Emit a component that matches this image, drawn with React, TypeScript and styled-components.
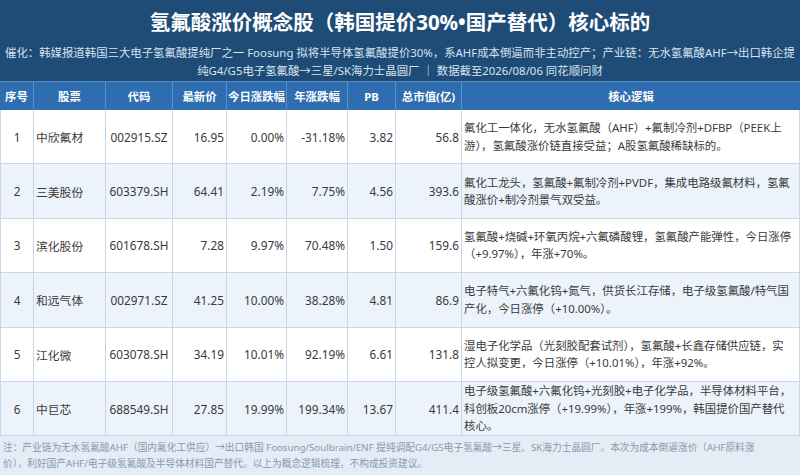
import styled, { createGlobalStyle } from "styled-components";

interface StockRow {
  no: number;
  name: string;
  code: string;
  price: string;
  today: string;
  year: string;
  pb: string;
  cap: string;
  logic: string[];
}

const rows: StockRow[] = [
  {
    no: 1,
    name: "中欣氟材",
    code: "002915.SZ",
    price: "16.95",
    today: "0.00%",
    year: "-31.18%",
    pb: "3.82",
    cap: "56.8",
    logic: ["氟化工一体化，无水氢氟酸（AHF）+氟制冷剂+DFBP（PEEK上", "游），氢氟酸涨价链直接受益；A股氢氟酸稀缺标的。"],
  },
  {
    no: 2,
    name: "三美股份",
    code: "603379.SH",
    price: "64.41",
    today: "2.19%",
    year: "7.75%",
    pb: "4.56",
    cap: "393.6",
    logic: ["氟化工龙头，氢氟酸+氟制冷剂+PVDF，集成电路级氟材料，氢氟", "酸涨价+制冷剂景气双受益。"],
  },
  {
    no: 3,
    name: "滨化股份",
    code: "601678.SH",
    price: "7.28",
    today: "9.97%",
    year: "70.48%",
    pb: "1.50",
    cap: "159.6",
    logic: ["氢氟酸+烧碱+环氧丙烷+六氟磷酸锂，氢氟酸产能弹性，今日涨停", "（+9.97%），年涨+70%。"],
  },
  {
    no: 4,
    name: "和远气体",
    code: "002971.SZ",
    price: "41.25",
    today: "10.00%",
    year: "38.28%",
    pb: "4.81",
    cap: "86.9",
    logic: ["电子特气+六氟化钨+氮气，供货长江存储，电子级氢氟酸/特气国", "产化，今日涨停（+10.00%）。"],
  },
  {
    no: 5,
    name: "江化微",
    code: "603078.SH",
    price: "34.19",
    today: "10.01%",
    year: "92.19%",
    pb: "6.61",
    cap: "131.8",
    logic: ["湿电子化学品（光刻胶配套试剂），氢氟酸+长鑫存储供应链，实", "控人拟变更，今日涨停（+10.01%），年涨+92%。"],
  },
  {
    no: 6,
    name: "中巨芯",
    code: "688549.SH",
    price: "27.85",
    today: "19.99%",
    year: "199.34%",
    pb: "13.67",
    cap: "411.4",
    logic: [
      "电子级氢氟酸+六氟化钨+光刻胶+电子化学品，半导体材料平台，",
      "科创板20cm涨停（+19.99%），年涨+199%，韩国提价国产替代",
      "核心。",
    ],
  },
];

const headers = ["序号", "股票", "代码", "最新价", "今日涨跌幅", "年涨跌幅", "PB", "总市值(亿)", "核心逻辑"];

export default function App() {
  return (
    <>
      <GlobalStyle />
      <StPage>
        <StBanner>
          <StTitle>氢氟酸涨价概念股（韩国提价30%•国产替代）核心标的</StTitle>
          <StSubtitle>
            <span>
              催化：韩媒报道韩国三大电子氢氟酸提纯厂之一 Foosung 拟将半导体氢氟酸提价30%，系AHF成本倒逼而非主动控产；产业链：无水氢氟酸AHF→出口韩企提
            </span>
            <span>纯G4/G5电子氢氟酸→三星/SK海力士晶圆厂 ｜ 数据截至2026/08/06 同花顺问财</span>
          </StSubtitle>
        </StBanner>

        <StHeadRow>
          {headers.map((h) => (
            <StHeadCell key={h}>{h}</StHeadCell>
          ))}
        </StHeadRow>

        {rows.map((r) => (
          <StRow key={r.no} $alt={r.no % 2 === 0}>
            <StCell $align="center">{r.no}</StCell>
            <StCell $align="left">{r.name}</StCell>
            <StCell $align="center">{r.code}</StCell>
            <StCell $align="right">{r.price}</StCell>
            <StCell $align="right">{r.today}</StCell>
            <StCell $align="right">{r.year}</StCell>
            <StCell $align="right">{r.pb}</StCell>
            <StCell $align="right">{r.cap}</StCell>
            <StLogic>
              {r.logic.map((line) => (
                <span key={line}>{line}</span>
              ))}
            </StLogic>
          </StRow>
        ))}

        <StFooter>
          <span>
            注：产业链为无水氢氟酸AHF（国内氟化工供应）→出口韩国 Foosung/Soulbrain/ENF 提纯调配G4/G5电子氢氟酸→三星、SK海力士晶圆厂。本次为成本倒逼涨价（AHF原料涨
          </span>
          <span>价），利好国产AHF/电子级氢氟酸及半导体材料国产替代。以上为概念逻辑梳理，不构成投资建议。</span>
        </StFooter>
      </StPage>
    </>
  );
}

const COLUMNS = "33px 72px 67px 54px 60px 61px 48px 66px 1fr";

const GlobalStyle = createGlobalStyle`
  html, body {
    margin: 0;
    padding: 0;
    background: #ffffff;
  }
  body {
    font-family: "Noto Sans", "Noto Sans CJK SC", sans-serif;
  }
`;

const StPage = styled.div`
  display: flex;
  flex-direction: column;

  width: 800px;
  height: 475px;
  overflow: hidden;

  color: #3a3a3a;
`;

const StBanner = styled.header`
  display: flex;
  flex-direction: column;
  align-items: center;

  height: 81px;
  box-sizing: border-box;
  padding-top: 7px;

  background-color: #1f4c77;
`;

const StTitle = styled.h1`
  margin: 0;

  font-size: 20.5px;
  font-weight: 700;
  line-height: 30px;
  color: #ffffff;
  white-space: nowrap;
`;

const StSubtitle = styled.p`
  display: flex;
  flex-direction: column;
  align-items: center;

  margin: 7px 0 0;

  font-size: 11.4px;
  line-height: 18px;
  color: #d7e3f0;

  span {
    white-space: nowrap;
  }
`;

const StHeadRow = styled.div`
  display: grid;
  grid-template-columns: ${COLUMNS};

  height: 29px;

  background-color: #2d6db0;
  border-top: 1px solid #5a8cc4;
  box-sizing: border-box;
`;

const StHeadCell = styled.div`
  display: flex;
  justify-content: center;
  align-items: center;

  border-left: 1px solid #5b8fc8;

  font-size: 11.4px;
  font-weight: 700;
  color: #ffffff;
  white-space: nowrap;

  &:first-child {
    border-left: none;
  }
`;

const StRow = styled.div<{ $alt: boolean }>`
  display: grid;
  grid-template-columns: ${COLUMNS};

  height: 54.4px;
  box-sizing: border-box;

  background-color: ${({ $alt }) => ($alt ? "#edf3fa" : "#ffffff")};
  border-bottom: 1px solid #c8d6e7;
`;

const StCell = styled.div<{ $align: "left" | "center" | "right" }>`
  display: flex;
  align-items: center;
  justify-content: ${({ $align }) =>
    $align === "left" ? "flex-start" : $align === "right" ? "flex-end" : "center"};

  padding: 0 2px;
  border-left: 1px solid #c8d6e7;

  font-size: 11.8px;
  white-space: nowrap;
`;

const StLogic = styled.div`
  display: flex;
  flex-direction: column;
  justify-content: center;

  padding: 0 2px;
  border-left: 1px solid #c8d6e7;
  border-right: 1px solid #c8d6e7;

  font-size: 11.4px;
  line-height: 17.5px;

  span {
    white-space: nowrap;
  }
`;

const StFooter = styled.footer`
  display: flex;
  flex-direction: column;
  justify-content: center;

  flex: 1;
  padding: 0 3px;

  background-color: #e4ecf6;

  font-size: 9.7px;
  line-height: 16px;
  color: #8a99ad;

  span {
    white-space: nowrap;
  }
`;
